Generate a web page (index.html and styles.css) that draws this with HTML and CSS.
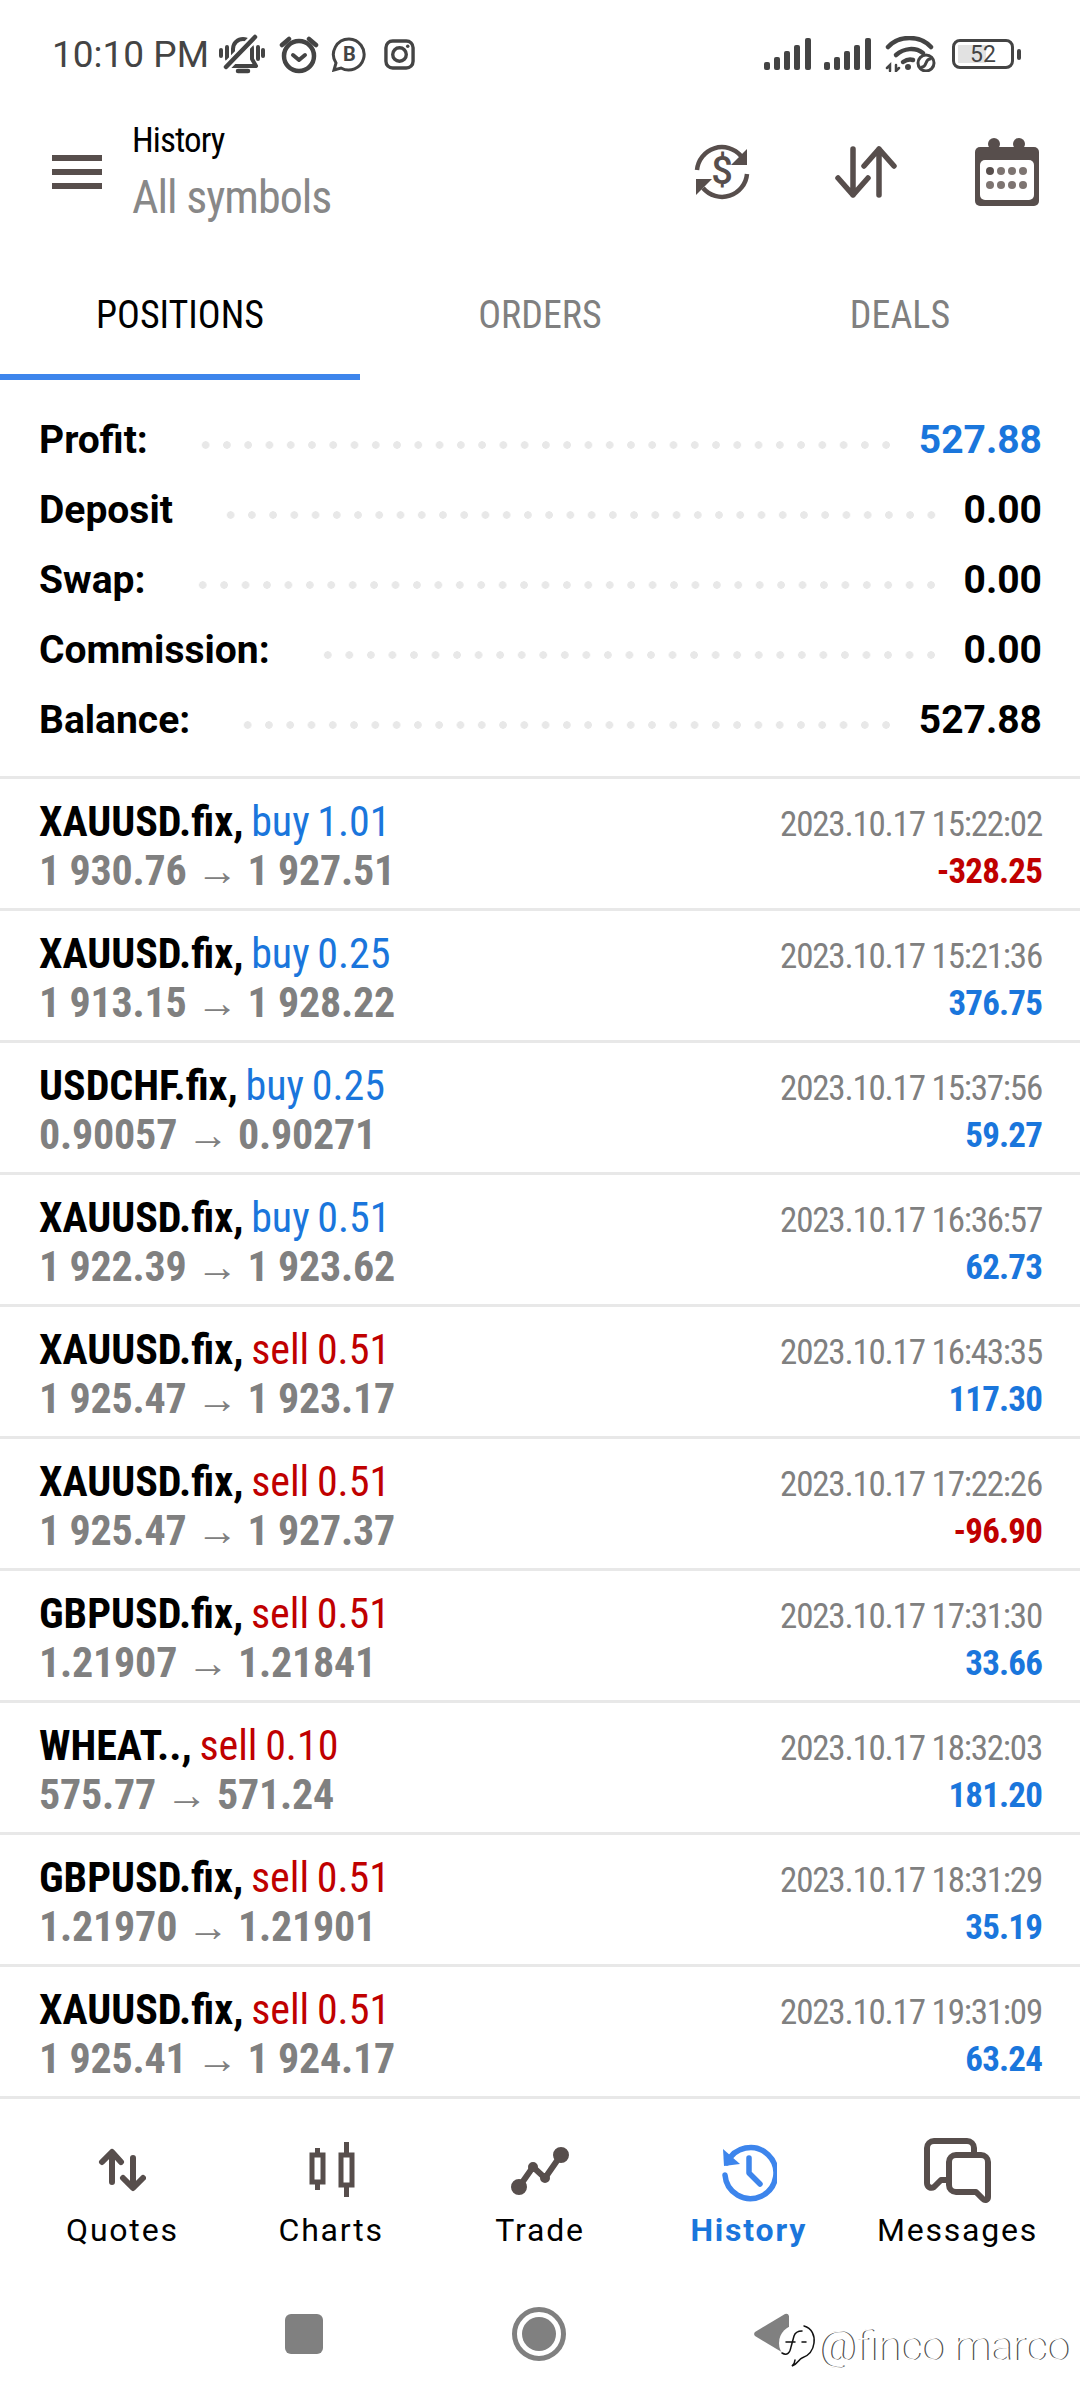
FILE: index.html
```html
<!DOCTYPE html>
<html lang="en">

<head>
  <meta charset="UTF-8" />
  <meta name="viewport" content="width=device-width, initial-scale=1.0" />
  <title>History</title>
  <link rel="stylesheet" href="styles.css">
</head>

<body>
  <!-- status bar -->
  <div class="status">
    <div class="status-left">
      <span class="time">10:10 PM</span>
      <svg width="46" height="40" viewBox="0 0 46 40" fill="none" stroke="#444" stroke-width="4" stroke-linecap="round">
        <path d="M14 25V15C14 9 19 5 24 5c5 0 9 4 9 10v10l4 7H12" stroke-linejoin="round"/>
        <path d="M19 37h10" stroke-width="4.500"/>
        <path d="M2 16v6M8 13v12M39 13v12M44 16v6"/>
        <path d="M7 33 36 3" stroke="#fff" stroke-width="9"/>
        <path d="M7 33 36 3" stroke-width="4.500"/>
      </svg>
      <svg width="40" height="40" viewBox="0 0 40 40" fill="none" stroke="#444" stroke-width="4.500" stroke-linecap="round" stroke-linejoin="round">
        <circle cx="20" cy="22" r="15"/>
        <path d="M14 21l6 5 6-5" stroke-width="4"/>
        <path d="M3 11l7-6M37 11l-7-6"/>
      </svg>
      <svg class="biz" width="36" height="36" viewBox="0 0 36 36" fill="none" stroke="#444" stroke-width="3">
        <path d="M18 3a15.500 15.500 0 1 1-8 29l-7 2 2-7A15.500 15.500 0 0 1 18 3z"/>
        <text x="18.500" y="25" class="biz-b">B</text>
      </svg>
      <svg class="insta" width="31" height="31" viewBox="0 0 32 32" fill="none" stroke="#444" stroke-width="3.500">
        <rect x="2" y="2" width="28" height="28" rx="7"/>
        <circle cx="16" cy="16" r="7"/>
        <circle cx="24.500" cy="7.500" r="1.800" fill="#444" stroke="none"/>
      </svg>
    </div>
    <div class="status-right">
      <svg width="48" height="32" viewBox="0 0 48 32" fill="#444">
        <rect x="0" y="24" width="6" height="8" rx="2"/>
        <rect x="10" y="19" width="6" height="13" rx="2"/>
        <rect x="20" y="13" width="6" height="19" rx="2"/>
        <rect x="30" y="7" width="6" height="25" rx="2"/>
        <rect x="41" y="0" width="6" height="32" rx="2"/>
      </svg>
      <svg width="48" height="32" viewBox="0 0 48 32" fill="#444">
        <rect x="0" y="24" width="6" height="8" rx="2"/>
        <rect x="10" y="19" width="6" height="13" rx="2"/>
        <rect x="20" y="13" width="6" height="19" rx="2"/>
        <rect x="30" y="7" width="6" height="25" rx="2"/>
        <rect x="41" y="0" width="6" height="32" rx="2"/>
      </svg>
      <svg class="wifi" width="52" height="36" viewBox="0 0 52 36" fill="none" stroke="#444" stroke-width="4.500" stroke-linecap="round">
        <path d="M3 11C14 -1 35 -1 46 11"/>
        <path d="M11 19c8-7 19-8 27-2"/>
        <path d="M18 26c3-2 7-3 10-2"/>
        <circle cx="23" cy="31" r="3" fill="#444" stroke="none"/>
        <path d="M2 32l3-3v6M11 29v6l3-3" stroke-width="2.500"/>
        <circle cx="41" cy="27" r="8" stroke-width="3" fill="#fff"/>
        <path d="M37 31c5 0 3-8 8-8" stroke-width="3"/>
      </svg>
      <div class="battery"><span class="battery-level"></span><span class="battery-num">52</span></div>
      <span class="battery-nub"></span>
    </div>
  </div>

  <!-- toolbar -->
  <div class="toolbar">
    <div class="burger"><i></i><i></i><i></i></div>
    <div class="titles">
      <p class="title">History</p>
      <p class="subtitle">All symbols</p>
    </div>
    <div class="actions">
      <svg class="act-refresh" width="58" height="58" viewBox="0 0 58 58" fill="none" stroke="#574e4c" stroke-width="4.500">
        <path d="M4 27A25 25 0 0 1 48 13"/>
        <path d="M54 31A25 25 0 0 1 10 45"/>
        <path d="M54 6v16H38z" fill="#574e4c" stroke="none"/>
        <path d="M3 52V36h16z" fill="#574e4c" stroke="none"/>
        <text x="29" y="41" class="dollar">$</text>
      </svg>
      <svg width="62" height="54" viewBox="0 0 62 54" fill="none" stroke="#574e4c" stroke-width="5.500" stroke-linecap="round" stroke-linejoin="round">
        <path d="M18 4v46M3 33l15 17 15-17"/>
        <path d="M44 50V4M29 21L44 4l15 17"/>
      </svg>
      <svg width="64" height="68" viewBox="0 0 64 68" fill="#574e4c">
        <path d="M5 9h54a5 5 0 0 1 5 5v49a5 5 0 0 1-5 5H5a5 5 0 0 1-5-5V14a5 5 0 0 1 5-5z"/>
        <circle cx="19" cy="6" r="6"/>
        <circle cx="44" cy="6" r="6"/>
        <rect x="5" y="22" width="54" height="40" rx="5" fill="#fff"/>
        <circle cx="15" cy="33" r="4"/>
        <g fill="#7d7471">
          <circle cx="26" cy="33" r="4"/><circle cx="37" cy="33" r="4"/><circle cx="48" cy="33" r="4"/>
          <circle cx="15" cy="47" r="4"/><circle cx="26" cy="47" r="4"/><circle cx="37" cy="47" r="4"/><circle cx="48" cy="47" r="4"/>
        </g>
      </svg>
    </div>
  </div>

  <!-- tabs -->
  <div class="tabs">
    <div class="tab active">POSITIONS</div>
    <div class="tab">ORDERS</div>
    <div class="tab">DEALS</div>
  </div>

  <!-- totals -->
  <div class="summary">
    <div class="sum-row"><b>Profit:</b><span class="dots"></span><b class="blue">527.88</b></div>
    <div class="sum-row"><b>Deposit</b><span class="dots"></span><b>0.00</b></div>
    <div class="sum-row"><b>Swap:</b><span class="dots"></span><b>0.00</b></div>
    <div class="sum-row"><b>Commission:</b><span class="dots"></span><b>0.00</b></div>
    <div class="sum-row"><b>Balance:</b><span class="dots"></span><b>527.88</b></div>
  </div>

  <!-- deals list -->
  <div class="list">
    <div class="row">
      <div><p class="symbol">XAUUSD.fix, <span class="buy">buy 1.01</span></p><p class="price">1 930.76 → 1 927.51</p></div>
      <div class="right"><p class="date">2023.10.17 15:22:02</p><p class="amount red">-328.25</p></div>
    </div>
    <div class="row">
      <div><p class="symbol">XAUUSD.fix, <span class="buy">buy 0.25</span></p><p class="price">1 913.15 → 1 928.22</p></div>
      <div class="right"><p class="date">2023.10.17 15:21:36</p><p class="amount">376.75</p></div>
    </div>
    <div class="row">
      <div><p class="symbol">USDCHF.fix, <span class="buy">buy 0.25</span></p><p class="price">0.90057 → 0.90271</p></div>
      <div class="right"><p class="date">2023.10.17 15:37:56</p><p class="amount">59.27</p></div>
    </div>
    <div class="row">
      <div><p class="symbol">XAUUSD.fix, <span class="buy">buy 0.51</span></p><p class="price">1 922.39 → 1 923.62</p></div>
      <div class="right"><p class="date">2023.10.17 16:36:57</p><p class="amount">62.73</p></div>
    </div>
    <div class="row">
      <div><p class="symbol">XAUUSD.fix, <span class="sell">sell 0.51</span></p><p class="price">1 925.47 → 1 923.17</p></div>
      <div class="right"><p class="date">2023.10.17 16:43:35</p><p class="amount">117.30</p></div>
    </div>
    <div class="row">
      <div><p class="symbol">XAUUSD.fix, <span class="sell">sell 0.51</span></p><p class="price">1 925.47 → 1 927.37</p></div>
      <div class="right"><p class="date">2023.10.17 17:22:26</p><p class="amount red">-96.90</p></div>
    </div>
    <div class="row">
      <div><p class="symbol">GBPUSD.fix, <span class="sell">sell 0.51</span></p><p class="price">1.21907 → 1.21841</p></div>
      <div class="right"><p class="date">2023.10.17 17:31:30</p><p class="amount">33.66</p></div>
    </div>
    <div class="row">
      <div><p class="symbol">WHEAT.., <span class="sell">sell 0.10</span></p><p class="price">575.77 → 571.24</p></div>
      <div class="right"><p class="date">2023.10.17 18:32:03</p><p class="amount">181.20</p></div>
    </div>
    <div class="row">
      <div><p class="symbol">GBPUSD.fix, <span class="sell">sell 0.51</span></p><p class="price">1.21970 → 1.21901</p></div>
      <div class="right"><p class="date">2023.10.17 18:31:29</p><p class="amount">35.19</p></div>
    </div>
    <div class="row">
      <div><p class="symbol">XAUUSD.fix, <span class="sell">sell 0.51</span></p><p class="price">1 925.41 → 1 924.17</p></div>
      <div class="right"><p class="date">2023.10.17 19:31:09</p><p class="amount">63.24</p></div>
    </div>
  </div>

  <!-- bottom tabs -->
  <div class="nav">
    <div class="nav-item">
      <svg width="48" height="48" viewBox="0 0 48 48" fill="none" stroke="#574e4c" stroke-width="6" stroke-linecap="round" stroke-linejoin="round">
        <path d="M14 36V7M4 16L14 6l9 10"/>
        <path d="M35 12v29M25 32l10 10 10-10"/>
      </svg>
      <span>Quotes</span>
    </div>
    <div class="nav-item">
      <svg width="48" height="56" viewBox="0 0 48 56" fill="none" stroke="#574e4c" stroke-width="5">
        <rect x="5" y="13" width="11" height="27"/>
        <path d="M10.500 6v7M10.500 40v8"/>
        <rect x="34" y="13" width="11" height="30"/>
        <path d="M39.500 0v13M39.500 43v12"/>
      </svg>
      <span>Charts</span>
    </div>
    <div class="nav-item">
      <svg width="58" height="50" viewBox="0 0 58 50" fill="#574e4c" stroke="#574e4c" stroke-width="6">
        <path d="M8 42L22 22l12 11L50 10" fill="none" stroke-linejoin="round"/>
        <circle cx="8" cy="42" r="5"/><circle cx="22" cy="22" r="2"/><circle cx="34" cy="33" r="2"/><circle cx="50" cy="10" r="5"/>
      </svg>
      <span>Trade</span>
    </div>
    <div class="nav-item active">
      <svg width="56" height="58" viewBox="0 0 56 58" fill="none" stroke="#3d85ec" stroke-width="5.500" stroke-linecap="round">
        <path d="M6 22A25.500 25.500 0 1 1 4 34"/>
        <path d="M2 8l1 17 16-2z" fill="#3d85ec" stroke="none"/>
        <path d="M28 17v15l11 11" stroke-linejoin="round"/>
      </svg>
      <span>History</span>
    </div>
    <div class="nav-item">
      <svg width="68" height="64" viewBox="0 0 68 64" fill="none" stroke="#574e4c" stroke-width="6" stroke-linejoin="round">
        <path d="M50 17V10a7 7 0 0 0-7-7H10a7 7 0 0 0-7 7v35c0 4 4 6 7 4l7-7h8"/>
        <path d="M32 17h25a7 7 0 0 1 7 7v35c0 3-3 4-5 2l-7-7H32a7 7 0 0 1-7-7V24a7 7 0 0 1 7-7z"/>
      </svg>
      <span>Messages</span>
    </div>
  </div>

  <!-- system navigation -->
  <div class="sysnav">
    <span class="sys-square"></span>
    <span class="sys-ring"><i></i></span>
    <svg class="sys-back" width="38" height="42" viewBox="0 0 38 42" fill="#808080">
      <path d="M36 3v36a3 3 0 0 1-4 2L2 23a3 3 0 0 1 0-4L32 1a3 3 0 0 1 4 2z"/>
    </svg>
  </div>

  <!-- watermark -->
  <div class="watermark">
    <svg width="40" height="44" viewBox="0 0 40 44" fill="none" stroke="#111" stroke-width="1.500" stroke-linecap="round">
      <circle cx="19" cy="19" r="18" fill="#fff" stroke="none"/>
      <path d="M26 2c8 2 11 10 10 17-1 8-6 13-12 15-3 1-4 6-10 8 2-2 3-4 3-6"/>
      <path d="M4 29c5 3 8 0 9-6l3-11c1-3 4-5 8-5M8 18h9M24 18h4"/>
    </svg>
    <span>@finco marco</span>
  </div>
</body>

</html>
```

FILE: styles.css
```css
* {
  box-sizing: border-box;
}

body {
  width: 1080px;
  height: 2400px;
  margin: 0;
  padding: 0;
  position: relative;
  overflow: hidden;
  background-color: #fff;
  font-family: Roboto, "Liberation Sans", sans-serif;
  color: #000;
}

p {
  margin: 0;
}

/* status bar */
.status {
  height: 108px;
  padding: 0 59px 0 52px;
  display: flex;
  justify-content: space-between;
  align-items: center;
}

.status-left,
.status-right {
  display: flex;
  align-items: center;
}

.status-left {
  gap: 14px;
}

.status-right {
  gap: 12px;
}

.status svg {
  display: block;
}

.time {
  font-size: 37px;
  color: #444;
  margin-right: -4px;
}

.biz {
  margin-left: -2px;
}

.biz-b {
  font-size: 20px;
  font-weight: 700;
  text-anchor: middle;
  fill: #444;
  stroke: none;
}

.insta {
  margin-left: 3px;
}

.wifi {
  margin-left: 1px;
}

.battery {
  width: 62px;
  height: 30px;
  margin-left: 3px;
  border: 3.5px solid #444;
  border-radius: 8px;
  display: flex;
  align-items: center;
  justify-content: center;
  position: relative;
}

.battery-level {
  position: absolute;
  left: 3px;
  top: 3px;
  bottom: 3px;
  width: 28px;
  background-color: #e2e2e2;
}

.battery-num {
  position: relative;
  font-size: 23px;
  color: #444;
}

.battery-nub {
  width: 4px;
  height: 11px;
  margin-left: -9px;
  border-radius: 2px;
  background-color: #444;
}

/* toolbar */
.toolbar {
  height: 128px;
  padding: 0 41px 0 52px;
  display: flex;
  align-items: center;
}

.burger {
  width: 50px;
  margin-right: 30px;
}

.burger i {
  display: block;
  height: 6px;
  margin: 8px 0;
  background-color: #574e4c;
}

.titles {
  flex: 1;
  font-stretch: 75%;
}

.title {
  font-size: 35px;
  line-height: 42px;
  letter-spacing: -0.9px;
}

.subtitle {
  margin-top: 7px;
  font-size: 46px;
  line-height: 56px;
  letter-spacing: -1px;
  color: #888;
}

.actions {
  display: flex;
  align-items: center;
  gap: 78px;
}

.act-refresh {
  margin-right: 6px;
}

.dollar {
  font-size: 38px;
  font-weight: 500;
  text-anchor: middle;
  fill: #574e4c;
  stroke: none;
}

/* tabs */
.tabs {
  height: 144px;
  display: flex;
}

.tab {
  width: 360px;
  height: 144px;
  padding-top: 20px;
  display: flex;
  align-items: center;
  justify-content: center;
  border-bottom: 6px solid transparent;
  font-size: 38px;
  font-stretch: 75%;
  color: #808080;
}

.tab.active {
  color: #000;
  border-bottom-color: #3d85ec;
}

/* totals */
.summary {
  height: 399px;
  padding: 25px 38px 0 39px;
  border-bottom: 3px solid #e8e8e8;
}

.sum-row {
  height: 70px;
  display: flex;
  align-items: center;
  font-size: 39px;
}

.sum-row b {
  font-weight: 700;
}

.dots {
  flex: 1;
  height: 8px;
  margin: 10px 22px 0 47px;
  background-image: radial-gradient(circle at center, #e8e8e8 3.5px, transparent 4px);
  background-size: 21.33px 8px;
  background-repeat: round no-repeat;
}

.blue {
  color: #1a76dc;
}

/* deals list */
.row {
  height: 132px;
  padding: 17px 38px 0 39px;
  display: flex;
  justify-content: space-between;
  border-bottom: 3px solid #e8e8e8;
}

.symbol {
  font-size: 42px;
  line-height: 52px;
  font-weight: 700;
  font-stretch: 75%;
  word-spacing: -2px;
}

.buy,
.sell {
  font-weight: 400;
}

.buy {
  color: #1a76dc;
}

.sell,
.red {
  color: #c00000 !important;
}

.price {
  font-size: 42px;
  line-height: 46px;
  letter-spacing: -0.2px;
  font-weight: 700;
  font-stretch: 75%;
  color: #808080;
}

.right {
  text-align: right;
}

.date {
  margin-top: 6px;
  font-size: 35px;
  line-height: 46px;
  letter-spacing: -1.2px;
  font-stretch: 75%;
  color: #808080;
}

.amount {
  font-size: 35px;
  line-height: 48px;
  letter-spacing: -0.85px;
  font-weight: 700;
  font-stretch: 75%;
  color: #1a76dc;
}

/* bottom tabs */
.nav {
  height: 180px;
  padding: 0 18px;
  display: flex;
}

.nav-item {
  width: 209px;
  height: 180px;
  padding-top: 28px;
  display: flex;
  flex-direction: column;
  align-items: center;
  font-size: 32px;
  letter-spacing: 1.8px;
}

.nav-item svg {
  height: 86px;
}

.nav-item span {
  margin-top: -2px;
}

.nav-item.active {
  color: #1a76dc;
  font-weight: 700;
}

/* system navigation */
.sysnav {
  height: 110px;
  padding: 0 0 0 285px;
  display: flex;
  align-items: center;
}

.sys-square {
  width: 38px;
  height: 40px;
  border-radius: 6px;
  background-color: #808080;
}

.sys-ring {
  width: 54px;
  height: 54px;
  margin-left: 189px;
  border: 5px solid #808080;
  border-radius: 50%;
  display: flex;
  align-items: center;
  justify-content: center;
}

.sys-ring i {
  display: block;
  width: 34px;
  height: 34px;
  border-radius: 50%;
  background-color: #808080;
}

.sys-back {
  margin-left: 187px;
}

/* watermark sits over the system bar */
.watermark {
  position: absolute;
  left: 778px;
  top: 2322px;
  display: flex;
  align-items: center;
}

.watermark span {
  font-size: 41px;
  font-weight: 200;
  color: #fff;
  text-shadow: 1.5px 0 0 #555;
  white-space: nowrap;
}
```
